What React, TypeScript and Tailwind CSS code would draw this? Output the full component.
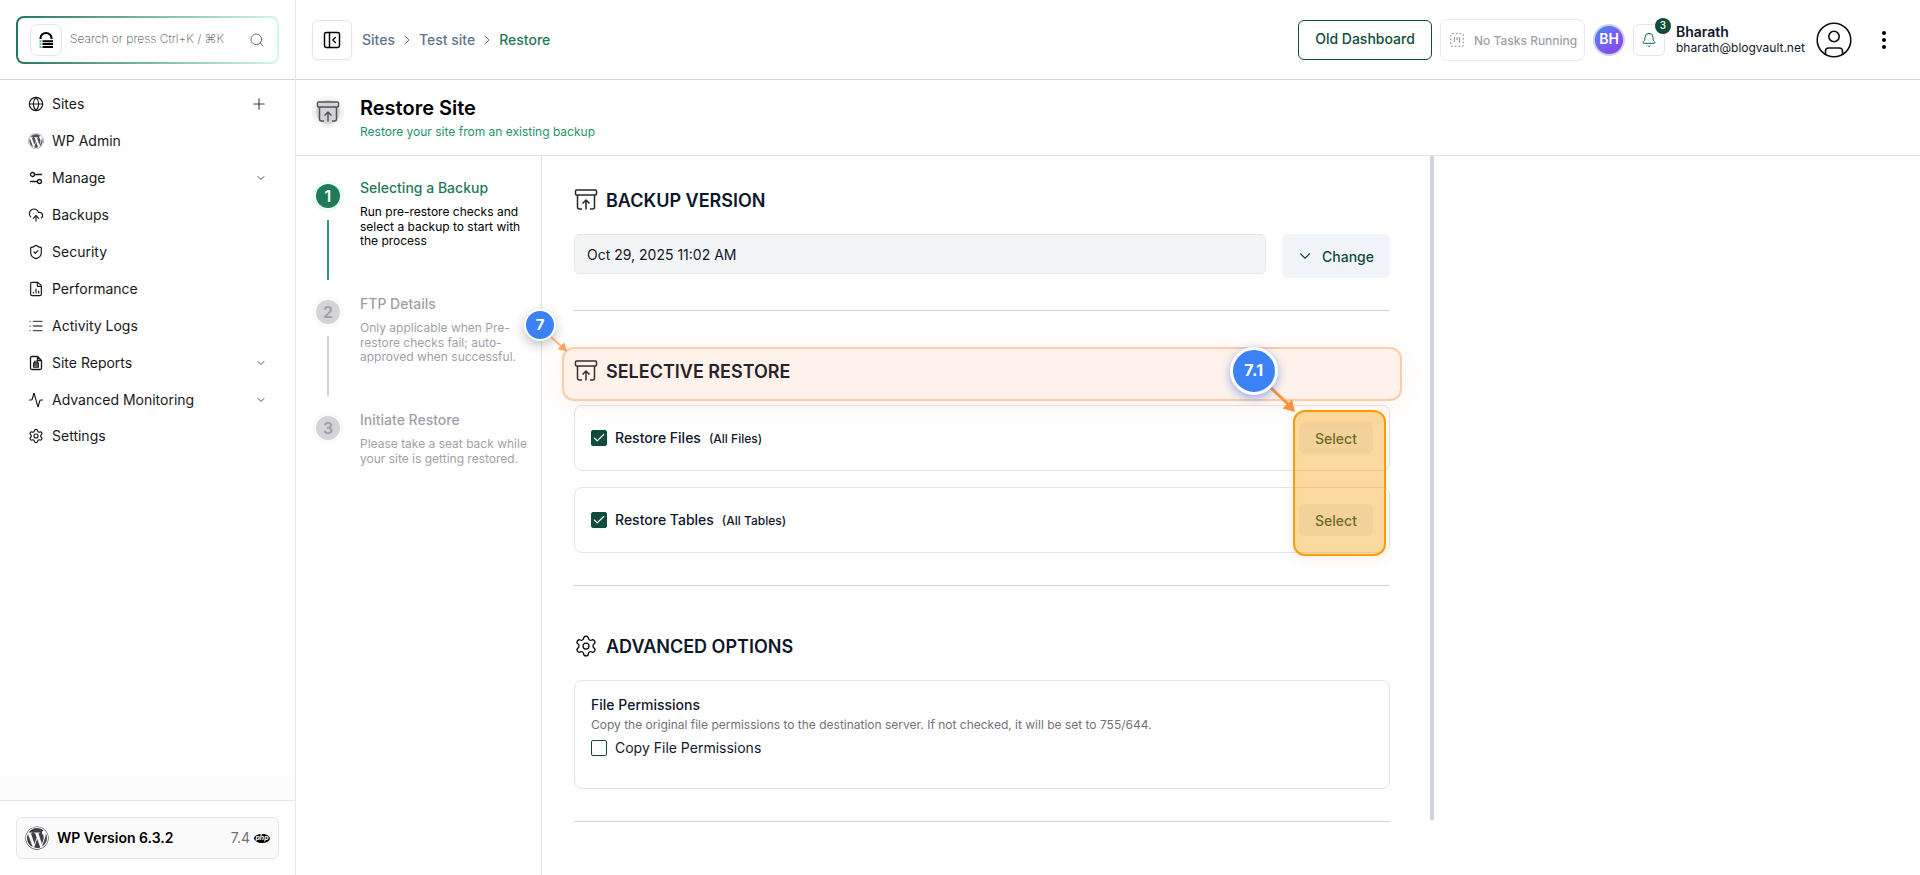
import React, { useState } from 'react'
import {
    Activity, Bell, Check, ChevronDown, ChevronRight, CloudUpload, FileChartColumn, Globe, List,
    PanelLeftClose, Plus, Search, Settings, ShieldCheck,
} from 'lucide-react'
import { FaWordpress } from 'react-icons/fa'

interface NavItem {
    label: string;
    icon: React.ReactNode;
    trailing?: 'plus' | 'chevron';
}

interface Step {
    title: string;
    text: string;
}

const BackupIcon = ({ className = '' }: { className?: string }) => (
    <svg viewBox="0 0 24 24" fill="none" stroke="currentColor" strokeWidth="1.5" strokeLinejoin="round" className={className}>
        <rect x="1.5" y="2" width="21" height="5" rx="1" />
        <path d="M3.5 7v12a2 2 0 0 0 2 2H8M20.5 7v12a2 2 0 0 1-2 2H16" />
        <path d="M12 21.5v-9M8.5 15.5 12 12l3.5 3.5" />
    </svg>
)

const SlidersIcon = () => (
    <svg viewBox="0 0 16 16" fill="none" stroke="currentColor" strokeWidth="1.3" strokeLinecap="round" className="size-4">
        <circle cx="4.5" cy="4.5" r="2" />
        <path d="M7 4.5h6.5M2.5 11.5H9" />
        <circle cx="11.5" cy="11.5" r="2" />
    </svg>
)

const SiteReportIcon = () => (
    <svg viewBox="0 0 16 16" fill="none" stroke="currentColor" strokeWidth="1.3" strokeLinejoin="round" className="size-4">
        <path d="M9.5 1.500H4A1.500 1.500 0 0 0 2.500 3v10A1.500 1.500 0 0 0 4 14.500h8a1.500 1.500 0 0 0 1.500-1.500V5.500zM9.500 1.500v4h4" />
        <rect x="5.7" y="8" width="4.6" height="4.2" />
        <path d="M6.5 8V6.200h3V8M8 9v2.500M5.700 10h4.600" strokeWidth="1" />
    </svg>
)

const navItems: NavItem[] = [
    { label: 'Sites', icon: <Globe className="size-4" strokeWidth={1.75} />, trailing: 'plus' },
    { label: 'WP Admin', icon: <FaWordpress className="size-4 text-zinc-600" /> },
    { label: 'Manage', icon: <SlidersIcon />, trailing: 'chevron' },
    { label: 'Backups', icon: <CloudUpload className="size-4" strokeWidth={1.75} /> },
    { label: 'Security', icon: <ShieldCheck className="size-4" strokeWidth={1.75} /> },
    { label: 'Performance', icon: <FileChartColumn className="size-4" strokeWidth={1.75} /> },
    { label: 'Activity Logs', icon: <List className="size-4 text-zinc-600" strokeWidth={2} /> },
    { label: 'Site Reports', icon: <SiteReportIcon />, trailing: 'chevron' },
    { label: 'Advanced Monitoring', icon: <Activity className="size-4" strokeWidth={1.75} />, trailing: 'chevron' },
    { label: 'Settings', icon: <Settings className="size-4" strokeWidth={1.75} /> },
]

const steps: Step[] = [
    { title: 'Selecting a Backup', text: 'Run pre-restore checks and select a backup to start with the process' },
    { title: 'FTP Details', text: 'Only applicable when Pre-restore checks fail; auto-approved when successful.' },
    { title: 'Initiate Restore', text: 'Please take a seat back while your site is getting restored.' },
]

function Sidebar() {
    return (
        <aside className="flex w-[296px] shrink-0 flex-col border-r border-slate-200">
            <div className="h-20 border-b border-zinc-300 px-4 pt-4">
                <div className="h-12 w-[263px] rounded-lg bg-linear-to-r from-[#1f7a5a] to-[#d1fae5] p-0.5">
                    <div className="flex h-full items-center rounded-md bg-white px-3">
                        <div className="flex size-8 items-center justify-center rounded-lg border border-zinc-200">
                            <svg viewBox="0 0 14 16" className="h-4 w-3.5">
                                <path d="M1.5 7V6a5.500 5 0 0 1 11 0v1" fill="none" stroke="#000" strokeWidth="2" />
                                <path d="M3.5 9.200H14M3.500 12H14M3.500 15H14" stroke="#000" strokeWidth="1.9" />
                                <path d="M.5 9.200h2M.5 12h2M.5 15h2" stroke="#2a9d86" strokeWidth="1.5" />
                            </svg>
                        </div>
                        <span className="relative -top-px ml-2 text-xs font-extralight text-zinc-700">Search or press Ctrl+K / ⌘K</span>
                        <Search className="ml-auto size-4 text-zinc-600" strokeWidth={1.25} />
                    </div>
                </div>
            </div>
            <nav className="flex flex-col pt-[5px]">
                {navItems.map((item) => (
                    <a key={item.label} className="flex h-[37px] items-center px-7 text-zinc-900 last:h-9">
                        {item.icon}
                        <span className="ml-2 text-sm">{item.label}</span>
                        {item.trailing === 'plus' && <Plus className="-mr-px ml-auto size-[18px] text-zinc-700" strokeWidth={1.5} />}
                        {item.trailing === 'chevron' && <ChevronDown className="ml-auto size-3 text-zinc-600" strokeWidth={2} />}
                    </a>
                ))}
            </nav>
            <div className="mt-auto h-6 bg-[#fcfcfc]" />
            <div className="h-[75px] border-t border-slate-200 px-4 pt-4">
                <div className="flex h-[42px] w-[263px] items-center rounded-md border border-slate-200 bg-zinc-50 px-2">
                    <FaWordpress className="size-6 text-zinc-700" />
                    <span className="ml-2 text-sm font-semibold text-black">WP Version 6.3.2</span>
                    <span className="ml-auto text-sm text-zinc-500">7.4</span>
                    <span className="ml-1 flex h-[9px] w-4 items-center justify-center rounded-[50%] bg-black pb-px text-[7px] leading-none font-bold text-white italic">php</span>
                </div>
            </div>
        </aside>
    )
}

function TopBar() {
    return (
        <header className="flex h-20 items-center border-b border-zinc-300 pr-[34px] pl-4">
            <button className="flex size-10 items-center justify-center rounded-md border border-zinc-200 shadow-xs">
                <PanelLeftClose className="size-5 text-black" strokeWidth={1.75} />
            </button>
            <div className="ml-2.5 flex items-center text-sm font-medium text-slate-500">
                <span>Sites</span>
                <ChevronRight className="mx-1 size-4" strokeWidth={1.5} />
                <span>Test site</span>
                <ChevronRight className="mx-1 size-4" strokeWidth={1.5} />
                <span className="text-[#1f7a5a]">Restore</span>
            </div>
            <button className="ml-auto flex h-10 w-[134px] items-center justify-center rounded-md border border-[#0f4c3a] pb-0.5 text-sm font-medium text-[#0f4c3a]">
                Old Dashboard
            </button>
            <div className="ml-2 flex h-[42px] w-[145px] items-center rounded-lg border border-zinc-200/80 pl-[9px] text-zinc-400">
                <svg viewBox="0 0 14 14" className="size-3.5" fill="none" stroke="currentColor" strokeWidth="1.2">
                    <rect x=".7" y=".7" width="12.6" height="12.6" rx="1.5" strokeDasharray="1.8 1.8" />
                    <path d="M4.500 4v5M7 4v3M9.500 4v6" />
                </svg>
                <span className="mt-[3px] ml-2.5 text-xs font-medium whitespace-nowrap">No Tasks Running</span>
            </div>
            <div className="ml-2 flex size-8 items-center justify-center rounded-full border-2 border-slate-300 bg-linear-to-br from-[#3b82f6] to-[#9333ea] pb-0.5 text-sm font-semibold text-white">
                BH
            </div>
            <button className="relative ml-2 flex size-8 items-center justify-center rounded-md border border-zinc-200">
                <Bell className="size-4 text-[#0f6b4c]" strokeWidth={1.5} />
                <span className="absolute -top-[7px] -right-[7px] flex size-4 items-center justify-center rounded-full bg-[#0f4c3a] text-[10px] font-medium text-white">3</span>
            </button>
            <div className="ml-[11px] flex w-[137px] flex-col text-slate-900">
                <span className="text-sm leading-4 font-semibold">Bharath</span>
                <span className="text-xs leading-4">bharath@blogvault.net</span>
            </div>
            <svg viewBox="0 0 36 36" fill="none" stroke="#111" strokeWidth="1.6" className="ml-[3px] size-9">
                <circle cx="18" cy="18" r="16.8" />
                <circle cx="18" cy="14.5" r="5.2" />
                <path d="M9.5 32.500V29a3 3 0 0 1 3-3h11a3 3 0 0 1 3 3v3.500" />
            </svg>
            <svg viewBox="0 0 4 20" className="ml-[30px] h-5 w-1">
                <circle cx="2" cy="3" r="2" />
                <circle cx="2" cy="10" r="2" />
                <circle cx="2" cy="17" r="2" />
            </svg>
        </header>
    )
}

function Stepper() {
    return (
        <div className="flex w-[246px] shrink-0 flex-col border-r border-zinc-200 pt-6 pr-3 pl-4">
            {steps.map((step, index) => (
                <div key={step.title} className="flex h-[116px]">
                    <div className="flex w-8 flex-col items-center">
                        <div className={`flex size-8 items-center justify-center rounded-full ${index === 0 ? 'bg-emerald-50' : 'bg-zinc-50'}`}>
                            <div className={`flex size-6 items-center justify-center rounded-full text-base font-semibold ${index === 0 ? 'bg-[#1f7a5a] text-white' : 'bg-zinc-300 text-zinc-400'}`}>
                                {index + 1}
                            </div>
                        </div>
                        {index < 2 && <div className={`mt-2 h-[60px] w-0.5 ${index === 0 ? 'bg-[#2a9d73]' : 'bg-zinc-300'}`} />}
                    </div>
                    <div className="-mt-0.5 ml-4 w-[169px]">
                        <div className={`text-sm font-medium ${index === 0 ? 'text-[#1f7a5a]' : 'text-zinc-400'}`}>{step.title}</div>
                        <p className={`mt-[7px] text-xs leading-[14.5px] ${index === 0 ? 'text-black' : 'text-zinc-400'}`}>{step.text}</p>
                    </div>
                </div>
            ))}
        </div>
    )
}

function SectionHeading({ icon, title }: { icon: React.ReactNode; title: string }) {
    return (
        <h2 className="flex h-6 items-center gap-2 text-lg leading-6 font-semibold text-slate-900">
            {icon}
            <span className="pt-0.5">{title}</span>
        </h2>
    )
}

function Checkbox({ checked, onChange }: { checked: boolean; onChange: () => void }) {
    return (
        <button
            onClick={onChange}
            className={`flex size-4 shrink-0 items-center justify-center rounded-[2px] border border-[#0f4c3a] shadow-xs ${checked ? 'bg-[#0f4c3a]' : 'bg-white'}`}
        >
            {checked && <Check className="size-3.5 shrink-0 text-white" strokeWidth={2} />}
        </button>
    )
}

function SelectRow({ title, note }: { title: string; note: string }) {
    const [checked, setChecked] = useState(true);

    return (
        <div className="flex h-[66px] items-center rounded-lg border border-zinc-200 px-4">
            <Checkbox checked={checked} onChange={() => setChecked(!checked)} />
            <span className="ml-2 text-sm font-medium text-slate-900">{title}</span>
            <span className="mt-0.5 ml-2 text-xs font-medium text-slate-900">{note}</span>
            <button className="ml-auto h-8 w-[74px] rounded-md bg-slate-100 pt-0.5 text-sm font-medium text-[#0f4c3a]">Select</button>
        </div>
    )
}

function Callouts() {
    return (
        <div className="pointer-events-none absolute inset-0">
            <div className="absolute top-[347px] left-[562px] h-[54px] w-[840px] rounded-xl border-2 border-[#fdba8c]/70 bg-[#fb823c]/10 shadow-[0_4px_24px_rgba(251,130,60,0.12)]" />
            <div className="absolute top-[410px] left-[1293px] h-[146px] w-[93px] rounded-xl border-2 border-[#f59e0b] bg-[#f59e0b]/40 shadow-[0_4px_12px_rgba(251,130,60,0.12)]" />
            <svg viewBox="0 0 1920 875" className="absolute inset-0 h-full w-full" fill="none">
                <path d="M551 337l10 9" stroke="#fb923c" strokeOpacity=".6" strokeWidth="1.8" />
                <path d="M567 351.500l-2.500-9-7 6.500z" fill="#fb923c" fillOpacity=".85" />
                <path d="M1270 387l18 17" stroke="#fb923c" strokeWidth="3" />
                <path d="M1295 412l-3-12.500-9.500 9z" fill="#fb923c" />
            </svg>
            <div className="absolute top-[309px] left-[524px] flex size-8 items-center justify-center rounded-full border-2 border-white bg-[#3b82f6] text-[15px] font-bold text-white shadow-[0_4px_12px_rgba(0,0,0,0.25)]">7</div>
            <div className="absolute top-[347px] left-[1230px] flex size-12 items-center justify-center rounded-full border-3 border-white bg-[#3b82f6] pb-[3px] text-base font-bold tracking-wide text-white shadow-[0_3px_10px_rgba(37,99,235,0.5)]">7.1</div>
        </div>
    )
}

export default function App() {
    const [copyPermissions, setCopyPermissions] = useState(false);

    return (
        <div className="relative flex h-[875px] w-[1920px] overflow-hidden bg-white font-[Inter,sans-serif]">
            <Sidebar />
            <div className="flex min-w-0 flex-1 flex-col">
                <TopBar />
                <div className="flex h-[76px] shrink-0 border-b border-zinc-200 pt-4 pl-4">
                    <div className="flex size-8 items-center justify-center rounded-full bg-zinc-100">
                        <div className="flex size-6 items-center justify-center rounded-full bg-zinc-300">
                            <BackupIcon className="size-6 shrink-0 text-zinc-600" />
                        </div>
                    </div>
                    <div className="-mt-0.5 ml-4">
                        <h1 className="text-xl font-semibold text-black">Restore Site</h1>
                        <p className="mt-0.5 text-xs leading-4 text-[#1f9468]">Restore your site from an existing backup</p>
                    </div>
                </div>
                <div className="flex min-h-0 flex-1">
                    <Stepper />
                    <main className="h-[664px] w-[892px] border-r-4 border-[#d1d5de] pt-8 pr-10 pl-8">
                        <SectionHeading icon={<BackupIcon className="size-6 text-zinc-800" />} title="BACKUP VERSION" />
                        <div className="mt-[22px] flex items-start gap-4">
                            <div className="flex h-10 w-[692px] items-center rounded-md border border-slate-200 bg-gray-100 px-3 pt-0.5 text-sm text-slate-900">
                                Oct 29, 2025 11:02 AM
                            </div>
                            <button className="flex h-11 flex-1 items-center rounded-md bg-slate-100 pl-3.5 text-sm font-medium text-[#0f4c3a]">
                                <ChevronDown className="size-[18px]" strokeWidth={1.5} />
                                <span className="ml-2 pt-0.5">Change</span>
                            </button>
                        </div>
                        <hr className="mt-8 mb-12 border-zinc-300" />
                        <SectionHeading icon={<BackupIcon className="size-6 text-zinc-800" />} title="SELECTIVE RESTORE" />
                        <div className="mt-[22px] flex flex-col gap-4">
                            <SelectRow title="Restore Files" note="(All Files)" />
                            <SelectRow title="Restore Tables" note="(All Tables)" />
                        </div>
                        <hr className="mt-8 mb-12 border-zinc-300" />
                        <SectionHeading icon={<Settings className="size-6 text-black" strokeWidth={1.25} />} title="ADVANCED OPTIONS" />
                        <div className="mt-[22px] h-[109px] rounded-lg border border-zinc-200 px-4 pt-[15px]">
                            <p className="text-sm leading-[18px] font-medium text-slate-900">File Permissions</p>
                            <p className="mt-0.5 text-xs leading-[18px] text-zinc-500">Copy the original file permissions to the destination server. If not checked, it will be set to 755/644.</p>
                            <div className="mt-[5px] flex items-center gap-2 text-sm leading-[18px] text-slate-900">
                                <Checkbox checked={copyPermissions} onChange={() => setCopyPermissions(!copyPermissions)} />
                                Copy File Permissions
                            </div>
                        </div>
                        <hr className="mt-8 border-zinc-300" />
                    </main>
                </div>
            </div>
            <Callouts />
        </div>
    )
}
